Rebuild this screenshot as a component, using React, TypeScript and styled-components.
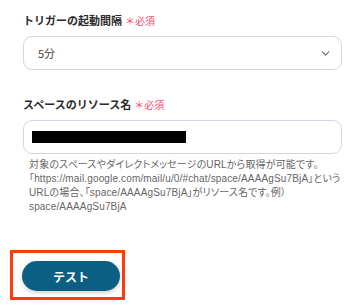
import styled, { createGlobalStyle } from "styled-components";
import { FiChevronDown } from "react-icons/fi";

const GlobalStyle = createGlobalStyle`
  body {
    margin: 0;
    background: #ffffff;
    font-family: "Noto Sans CJK JP", "Noto Sans", sans-serif;
    color: #2b2b2b;
  }
`;

const Page = styled.div`
  width: 364px;
  height: 306px;
  padding: 11px 22px 0 23px;
  box-sizing: border-box;
  display: flex;
  flex-direction: column;
`;

const Field = styled.div<{ $gap: number }>`
  display: flex;
  flex-direction: column;
  margin-bottom: ${(p) => p.$gap}px;
`;

const Label = styled.label`
  display: flex;
  align-items: center;
  height: 18px;
  font-size: 11px;
  font-weight: 700;
  color: #2b2b2b;
  margin-bottom: 7px;
`;

const Required = styled.span`
  margin-left: 3px;
  font-size: 10px;
  font-weight: 400;
  color: #f0506e;
`;

const Box = styled.div`
  height: 34px;
  box-sizing: border-box;
  border: 1px solid #d3d6e0;
  border-radius: 9px;
  display: flex;
  align-items: center;
  padding: 0 9px 0 14px;
  font-size: 11px;
  color: #444;
  background: #fff;
`;

const Value = styled.span`
  flex: 1;
`;

const Chevron = styled(FiChevronDown)`
  font-size: 13px;
  color: #666;
`;

const Redacted = styled.div`
  width: 154px;
  height: 12px;
  margin-left: -6px;
  background: #000;
`;

const Help = styled.p`
  margin: 4px 0 0 6px;
  font-family: "Liberation Sans", "Noto Sans CJK JP", sans-serif;
  font-feature-settings: "palt";
  font-size: 10px;
  line-height: 14px;
  letter-spacing: 0.15px;
  white-space: nowrap;
  color: #666;
`;

const Highlight = styled.div`
  width: 115px;
  height: 50px;
  margin-left: -13px;
  box-sizing: border-box;
  border: 3px solid #ff3b0a;
  display: flex;
  align-items: center;
  padding: 2px 0 0 9px;
`;

const Button = styled.button`
  width: 98px;
  height: 30px;
  border: none;
  border-radius: 15px;
  background: #0a5f82;
  color: #fff;
  font-family: inherit;
  font-size: 12px;
  font-weight: 700;
  box-shadow: 0 2px 4px rgba(0, 0, 0, 0.18);
`;

export default function App() {
  return (
    <>
      <GlobalStyle />
      <Page>
        <Field $gap={25}>
          <Label>
            トリガーの起動間隔<Required>＊必須</Required>
          </Label>
          <Box>
            <Value>5分</Value>
            <Chevron />
          </Box>
        </Field>
        <Field $gap={36}>
          <Label>
            スペースのリソース名<Required>＊必須</Required>
          </Label>
          <Box>
            <Redacted />
          </Box>
          <Help>
            対象のスペースやダイレクトメッセージのURLから取得が可能です。
            <br />
            「https://mail.google.com/mail/u/0/#chat/space/AAAAgSu7BjA」という
            <br />
            URLの場合、「space/AAAAgSu7BjA」がリソース名です。例）
            <br />
            space/AAAAgSu7BjA
          </Help>
        </Field>
        <Highlight>
          <Button>テスト</Button>
        </Highlight>
      </Page>
    </>
  );
}
